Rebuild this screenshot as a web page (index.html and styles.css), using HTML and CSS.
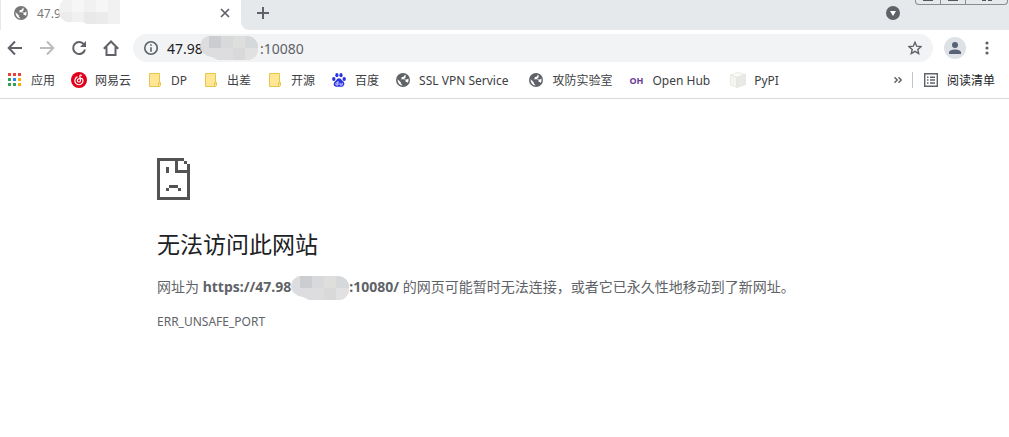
FILE: index.html
```html
<!DOCTYPE html>
<html lang="zh-CN">
<head>
    <meta charset="UTF-8">
    <title>无法访问此网站</title>
    <link rel="stylesheet" href="styles.css">
</head>
<body>

<!-- shared shapes -->
<svg class="defs" width="0" height="0" aria-hidden="true">
    <symbol id="globe" viewBox="0 0 14 14">
        <circle cx="7" cy="7" r="7" fill="currentColor"/>
        <path d="M1.6 6.2L4.8 9.2V10.5L6.5 12.2V12.6A5.6 5.6 0 0 1 1.6 6.2ZM8.6 1.7V2.6L7.2 4H5.7V5.4L4.6 6.3H8.4L9.6 7.6V9H11L11.6 10A5.6 5.6 0 0 0 12.4 5.4L10.8 6.6H9.2L8.2 5.4L9.6 4.4V2.1Z" fill="#fff"/>
    </symbol>
    <symbol id="folder" viewBox="0 0 12 14">
        <path d="M.5 .5H10.5V9.5H11.5V12.5L10.5 13.5H.5Z" fill="#ffe694" stroke="#e8c64d"/>
        <path d="M9.5 13V10H11" fill="none" stroke="#e8c64d"/>
    </symbol>
    <symbol id="mosaic" viewBox="0 0 58 24">
        <clipPath id="blob"><path d="M8 0H48Q58 2 58 12Q58 22 49 24H18L12 21Q0 19 0 10Q1 2 8 0Z"/></clipPath>
        <g clip-path="url(#blob)">
            <path d="M0 0H58V24H0Z" fill="#dddddf"/>
            <path d="M9 0H21V12H9Z" fill="#cbcdd1"/>
            <path d="M21 0H33V12H21Z" fill="#d7d9db"/>
            <path d="M33 0H45V12H33Z" fill="#dededd"/>
            <path d="M45 0H58V12H45Z" fill="#d6d9dc"/>
            <path d="M33 12H45V24H33Z" fill="#d9d9da"/>
            <path d="M45 12H58V24H45Z" fill="#e1e1e2"/>
        </g>
    </symbol>
</svg>

<header class="browser">
    <div class="tab-strip">
        <div class="tab">
            <svg class="tab-icon" width="14" height="14"><use href="#globe"/></svg>
            <span class="tab-title">47.9</span>
            <svg class="tab-mask" width="62" height="24" viewBox="0 0 62 24">
                <path d="M4 0H61V24H28L24 22H8Q0 19 0 12Q0 4 4 0Z" fill="#f1f1f1"/>
                <path d="M13 0H25V12H13ZM37 0H49V12H37Z" fill="#f6f6f6"/>
                <path d="M1 12H13V22H8Q1 19 1 12ZM37 12H49V24H37Z" fill="#ebebeb"/>
                <path d="M25 12H37V24H28L25 22Z" fill="#e9e9ea"/>
            </svg>
            <button class="icon-button tab-close" aria-label="关闭">
                <svg width="10" height="10" viewBox="0 0 10 10"><path d="M1 1L9 9M9 1L1 9" stroke="#5f6368" stroke-width="1.7"/></svg>
            </button>
        </div>
        <div class="strip-rest">
            <button class="icon-button new-tab" aria-label="新标签页">
                <svg width="12" height="12" viewBox="0 0 12 12"><path d="M6 0V12M0 6H12" stroke="#5f6368" stroke-width="2"/></svg>
            </button>
            <button class="icon-button tab-search" aria-label="搜索标签页">
                <svg width="14" height="14" viewBox="0 0 14 14"><circle cx="7" cy="7" r="7" fill="#5f6368"/><path d="M4 5H10L7 10Z" fill="#fff"/></svg>
            </button>
            <div class="window-controls">
                <button aria-label="最小化"><svg width="10" height="2"><path d="M0 0H10V1H0Z" fill="#555"/></svg></button>
                <button aria-label="最大化"><svg width="10" height="2"><path d="M0 0H10V1H0Z" fill="#555"/></svg></button>
                <button class="window-close" aria-label="关闭窗口"><svg width="10" height="2"><path d="M0 0H4V1H0ZM6 0H10V1H6Z" fill="#555"/></svg></button>
            </div>
        </div>
    </div>

    <div class="toolbar">
        <button class="icon-button" aria-label="后退">
            <svg width="16" height="16" viewBox="0 0 16 16" fill="none" stroke="#5f6368" stroke-width="2"><path d="M15 8H2M8 1.5L1.7 8L8 14.5"/></svg>
        </button>
        <button class="icon-button" aria-label="前进">
            <svg width="16" height="16" viewBox="0 0 16 16" fill="none" stroke="#babcbe" stroke-width="2"><path d="M1 8H14M8 1.5L14.3 8L8 14.5"/></svg>
        </button>
        <button class="icon-button" aria-label="重新加载">
            <svg width="16" height="16" viewBox="0 0 16 16"><path d="M13 4.5A6 6 0 1 0 14 9.5" fill="none" stroke="#5f6368" stroke-width="2"/><path d="M15 1V7H9Z" fill="#5f6368"/></svg>
        </button>
        <button class="icon-button" aria-label="主页">
            <svg width="16" height="16" viewBox="0 0 16 16" fill="none" stroke="#5f6368" stroke-width="2"><path d="M.8 8.7L8 1.5L15.2 8.7M3.5 7V15H12.5V7"/></svg>
        </button>
        <div class="address-bar">
            <svg class="info" width="14" height="14" viewBox="0 0 14 14"><circle cx="7" cy="7" r="6.2" fill="none" stroke="#5f6368" stroke-width="1.6"/><path d="M6.2 3.2H7.8V4.8H6.2ZM6.2 6.2H7.8V10.8H6.2Z" fill="#5f6368"/></svg>
            <input class="host" type="text" value="47.98" aria-label="地址">
            <svg class="mask" width="58" height="24"><use href="#mosaic"/></svg>
            <input class="port" type="text" value=":10080" aria-label="端口">
            <button class="icon-button" aria-label="添加书签">
                <svg width="14" height="14" viewBox="0 0 14 14"><path d="M7 1.3L8.7 5.2L13 5.6L9.8 8.4L10.7 12.6L7 10.4L3.3 12.6L4.2 8.4L1 5.6L5.3 5.2Z" fill="none" stroke="#5f6368" stroke-width="1.4"/></svg>
            </button>
        </div>
        <button class="icon-button avatar" aria-label="个人资料">
            <svg width="12" height="12" viewBox="0 0 12 12" fill="#566275"><circle cx="6" cy="3" r="3"/><path d="M0 12V10Q1 7.5 6 7.5T12 10V12Z"/></svg>
        </button>
        <button class="icon-button menu" aria-label="菜单">
            <svg width="4" height="14" viewBox="0 0 4 14" fill="#5f6368"><circle cx="2" cy="2" r="1.6"/><circle cx="2" cy="7" r="1.6"/><circle cx="2" cy="12" r="1.6"/></svg>
        </button>
    </div>

    <nav class="bookmarks">
        <a href="#"><span class="icon"><svg width="14" height="14" viewBox="0 0 14 14"><path d="M0 0H3V3H0ZM5 0H8V3H5ZM10 0H13V3H10Z" fill="#ea4335"/><path d="M0 5H3V8H0ZM0 10H3V13H0ZM5 10H8V13H5Z" fill="#34a05a"/><path d="M5 5H8V8H5Z" fill="#2684fc"/><path d="M10 5H13V8H10ZM10 10H13V13H10Z" fill="#fbae05"/></svg></span>应用</a>
        <a href="#"><span class="icon"><svg width="16" height="16" viewBox="0 0 16 16"><circle cx="8" cy="8" r="8" fill="#e0001b"/><path d="M11 3.5Q8.7 2.2 8.8 4.5L9.5 8.4A1.6 1.6 0 1 1 7.8 6.8Q11.9 5.5 12 8.8A4.1 4.1 0 0 1 3.8 8.5Q3.8 6 6.4 4.6" fill="none" stroke="#fff" stroke-width="1.2"/></svg></span>网易云</a>
        <a href="#"><span class="icon"><svg width="12" height="14"><use href="#folder"/></svg></span>DP</a>
        <a href="#"><span class="icon"><svg width="12" height="14"><use href="#folder"/></svg></span>出差</a>
        <a href="#"><span class="icon"><svg width="12" height="14"><use href="#folder"/></svg></span>开源</a>
        <a href="#"><span class="icon"><svg width="14" height="14" viewBox="0 0 14 14"><g fill="#2932e1"><ellipse cx="1.8" cy="6" rx="1.7" ry="2.1"/><ellipse cx="4.9" cy="2.2" rx="1.6" ry="2.1"/><ellipse cx="9" cy="2.2" rx="1.6" ry="2.1"/><ellipse cx="12.2" cy="6" rx="1.7" ry="2.1"/><path d="M7 5.2Q9 5.3 9.8 7.3Q12.8 9 12.3 11.6Q11.4 14 9 13.8H5Q1.9 14 1.6 11.4Q1.5 9 4.2 7.3Q5 5.2 7 5.2Z"/></g><path d="M6 8V12H4.2Q3.2 10.8 4.3 9.8H6M8 9.8V12H10.2V9.8" fill="none" stroke="#fff" stroke-width=".8"/></svg></span>百度</a>
        <a href="#" class="long"><span class="icon"><svg width="14" height="14"><use href="#globe"/></svg></span>SSL VPN Service</a>
        <a href="#"><span class="icon"><svg width="14" height="14"><use href="#globe"/></svg></span>攻防实验室</a>
        <a href="#" class="long"><span class="icon open-hub">OH</span>Open Hub</a>
        <a href="#"><span class="icon"><svg width="16" height="16" viewBox="0 0 16 16" stroke="#deded8" stroke-width=".6"><path d="M.5 3L8 .5L15.5 2.5L7 5.5Z" fill="#fafaf8"/><path d="M.5 3L7 5.5V15.5L.5 13Z" fill="#f4f4f0"/><path d="M7 5.5L15.5 2.5V12.5L7 15.5Z" fill="#e9e9e5"/></svg></span>PyPI</a>
        <button class="icon-button more" aria-label="更多书签">
            <svg width="8" height="6" viewBox="0 0 8 6"><path d="M.5 .3L3.2 3L.5 5.7M4.5 .3L7.2 3L4.5 5.7" fill="none" stroke="#5f6368" stroke-width="1.5"/></svg>
        </button>
        <button class="reading-list">
            <svg width="14" height="14" viewBox="0 0 14 14"><path d="M.7 .7H13.3V13.3H.7Z" fill="none" stroke="#5f6368" stroke-width="1.4"/><path d="M3 3.5H4.5V5H3ZM6 3.5H11V5H6ZM3 6.3H4.5V7.8H3ZM6 6.3H11V7.8H6ZM3 9.2H4.5V10.7H3ZM6 9.2H11V10.7H6Z" fill="#5f6368"/></svg>
            阅读清单
        </button>
    </nav>
</header>

<main class="error-page">
    <svg class="sad-page" width="33" height="42" viewBox="0 0 11 14" shape-rendering="crispEdges" fill="#535353">
        <path d="M0 0H9V1H7V4H11V5H6V1H1V13H10V5H11V14H0Z"/>
        <path d="M9 1H10V2H9ZM10 2H11V5H10Z"/>
        <path d="M3 3H4V5H3ZM4 9H7V10H4ZM3 10H4V11H3ZM7 10H8V11H7Z"/>
    </svg>
    <h1>无法访问此网站</h1>
    <p>网址为 <strong>https://47.98<svg class="mask" width="58" height="24"><use href="#mosaic"/></svg>:10080/</strong> 的网页可能暂时无法连接，或者它已永久性地移动到了新网址。</p>
    <div class="error-code">ERR_UNSAFE_PORT</div>
</main>

</body>
</html>
```

FILE: styles.css
```css
* {
    box-sizing: border-box;
}
body {
    margin: 0;
    background-color: #fff;
    color: #5f6368;
    font-family: "Noto Sans", "Noto Sans CJK SC", sans-serif;
    font-size: 12px;
}
svg {
    display: block;
    flex-shrink: 0;
}
.defs {
    position: absolute;
}
button {
    padding: 0;
    border: none;
    background: none;
    font: inherit;
    cursor: pointer;
}
.icon-button {
    display: flex;
    align-items: center;
    justify-content: center;
    flex-shrink: 0;
}

/* tabs */
.tab-strip {
    display: flex;
    height: 30px;
    padding-left: 1px;
    background: linear-gradient(to right, #e5e9ec 1px, #fff 1px);
}
.tab {
    display: flex;
    align-items: center;
    width: 240px;
    height: 26px;
    padding: 0 11px 0 13px;
    background-color: #fff;
}
.tab-icon {
    color: #777;
}
.tab-title {
    margin-left: 9px;
    color: #777;
}
.tab-mask {
    align-self: flex-start;
    margin-left: -2px;
}
.tab-close {
    margin-left: auto;
}
.strip-rest {
    display: flex;
    flex: 1;
    align-items: flex-start;
    padding-right: 1px;
    border-bottom-left-radius: 8px;
    background-color: #e5e9ec;
}
.new-tab,
.tab-search {
    height: 26px;
}
.new-tab {
    margin-left: 16px;
}
.tab-search {
    margin-left: auto;
    margin-right: 15px;
}
.window-controls {
    display: flex;
    width: 93px;
    height: 5px;
    border: 1px solid #888b8d;
    border-top: none;
    border-radius: 0 0 4px 4px;
}
.window-controls button {
    display: flex;
    justify-content: center;
    width: 25px;
    border-right: 1px solid #888b8d;
}
.window-controls .window-close {
    flex: 1;
    border-right: none;
}

/* toolbar */
.toolbar {
    display: flex;
    align-items: center;
    gap: 16px;
    height: 36px;
    padding: 0 20px 0 7px;
}
.address-bar {
    display: flex;
    align-items: center;
    flex: 1;
    height: 28px;
    margin-left: -2px;
    padding: 0 11px;
    border-radius: 14px;
    background-color: #f1f3f4;
}
.address-bar input {
    min-width: 0;
    padding: 0;
    border: none;
    outline: none;
    background: none;
    font-family: inherit;
    font-size: 14px;
}
.address-bar .host {
    width: 37px;
    margin-left: 9px;
    color: #202124;
}
.address-bar .mask {
    margin-left: -4px;
}
.address-bar .port {
    flex: 1;
    margin-left: 2px;
    color: #5f6368;
}
.avatar {
    width: 22px;
    height: 22px;
    margin-left: -5px;
    border-radius: 50%;
    background-color: #dee1e6;
}
.menu {
    margin-left: 3px;
}

/* bookmarks */
.bookmarks {
    display: flex;
    align-items: center;
    gap: 16px;
    height: 33px;
    padding: 0 14px 4px 7px;
    border-bottom: 1px solid #d9dadb;
    white-space: nowrap;
}
.bookmarks a {
    display: flex;
    align-items: center;
    gap: 8px;
    color: #3c4043;
    text-decoration: none;
}
.bookmarks .long {
    padding-right: 4px;
}
.icon {
    display: flex;
    justify-content: center;
    width: 16px;
    color: #5f6368;
}
.open-hub {
    color: #6b3c96;
    font-size: 9px;
    font-weight: bold;
}
.more {
    margin-left: auto;
    margin-right: -6px;
}
.reading-list {
    display: flex;
    align-items: center;
    gap: 9px;
    height: 16px;
    padding-left: 11px;
    border-left: 1px solid #c4c7ca;
    color: #202124;
}

/* error page */
.error-page {
    padding: 59px 157px 0;
}
h1 {
    margin: 27px 0 0;
    color: #202124;
    font-size: 23px;
    font-weight: normal;
    line-height: 34px;
}
p {
    margin: 14px 0 0;
    font-size: 14px;
    line-height: 24px;
}
p .mask {
    display: inline-block;
    vertical-align: middle;
}
.error-code {
    margin-top: 13px;
    line-height: 18px;
}
```
